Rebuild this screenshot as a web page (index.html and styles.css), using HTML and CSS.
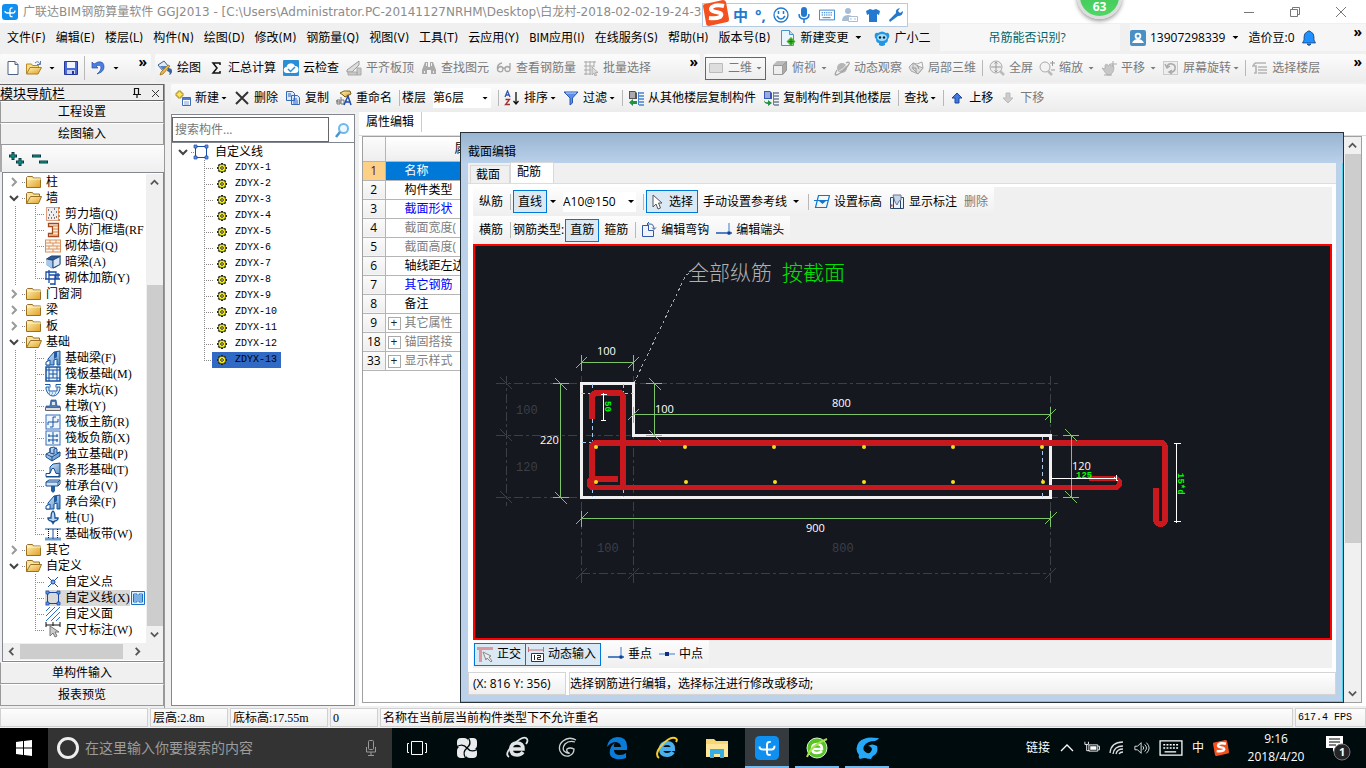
FILE: index.html
```html
<!DOCTYPE html>
<html lang="zh-CN">
<head>
<meta charset="utf-8">
<title>广联达BIM钢筋算量软件 GGJ2013</title>
<link rel="stylesheet" href="styles.css">
</head>
<body>
<svg class="defs" aria-hidden="true">
  <defs>
    <linearGradient id="gold" x1="0" y1="0" x2="1" y2="1"><stop offset="0" stop-color="#fff3b8"/><stop offset="1" stop-color="#e0a024"/></linearGradient>
    <linearGradient id="steel" x1="0" y1="0" x2="1" y2="1"><stop offset="0" stop-color="#e8f2fc"/><stop offset="1" stop-color="#4c86c6"/></linearGradient>
  </defs>
  <symbol id="logo" viewBox="0 0 16 16"><rect width="16" height="16" rx="3" fill="#0f8ff0"/><path d="M10.500 4Q8 3.500 8 6v5q0 2 2.500 1.500M3 7q0 2 2.500 2H11q2 0 2-2.500" fill="none" stroke="#fff" stroke-width="1.300"/></symbol>
  <symbol id="doc" viewBox="0 0 16 16"><path d="M3 1.500h7l3 3v10H3z" fill="#fff" stroke="#4d6185"/><path d="M10 1.500v3h3" fill="#cfe0f5" stroke="#4d6185"/></symbol>
  <symbol id="open" viewBox="0 0 16 16"><path d="M.5 14V4h5l1 1.500h6V8" fill="#f8dc80" stroke="#b8892c"/><path d="M.5 14 4 7.500h11.500L12 14z" fill="url(#gold)" stroke="#b07f20"/><path d="M9 3q3-3 5 1M14.500 1v3.500H11" fill="none" stroke="#5c7faa"/></symbol>
  <symbol id="save" viewBox="0 0 16 16"><path d="M1.500 1.500h13v13h-13z" fill="#4b6bd6" stroke="#26379b"/><path d="M4 2h8v6H4z" fill="#f1f5ff"/><path d="M4 10h8v4H4z" fill="#c9d3ee"/><path d="M9 11h2v3H9z" fill="#26379b"/></symbol>
  <symbol id="undo" viewBox="0 0 16 16"><path d="M2 2v6h6L6 6q5-2 5 2 0 3-4 6 7-2 7-7 0-6-6-5L4 4z" fill="#4b7fe0" stroke="#234fae" stroke-width=".7"/></symbol>
  <symbol id="paint" viewBox="0 0 16 16"><path d="M1 5 7 1l5 6-6 4z" fill="#dfe9f7" stroke="#3a5d91"/><path d="M3 6h7L6 10z" fill="#4d83c8"/><path d="m13 6-7 8-3 1 1-3 7-7z" fill="#f3b63c" stroke="#8e6517" stroke-width=".7"/><path d="M11 8q4 0 4 3t-3 4q2-3-2-4z" fill="#355f9e"/></symbol>
  <symbol id="sigma" viewBox="0 0 16 16"><path d="M12 5V3H5l4 5-4 5h7v-2" fill="none" stroke="#111" stroke-width="1.500"/></symbol>
  <symbol id="cloud" viewBox="0 0 16 16"><rect width="16" height="16" rx="1" fill="#2b8fd8"/><path d="M4 13a3 3 0 0 1-.5-6A4.500 4.500 0 0 1 12 6a3.500 3.500 0 0 1 0 7z" fill="#fff"/><path d="m5 9 2.500 2.500L12 7" fill="none" stroke="#2b8fd8" stroke-width="1.500"/></symbol>
  <symbol id="level" viewBox="0 0 16 16"><path d="M1 10 9 4l4-3v4L6 12H1z" fill="#ddd" stroke="#999"/><path d="M2 12h9v3H2zM11 8h4v7h-4z" fill="#c9c9c9" stroke="#aaa"/></symbol>
  <symbol id="binoc" viewBox="0 0 16 16"><path d="M4 2h3v5h2V2h3l3 8v4h-5v-4H6v4H1v-4z" fill="#aaa"/><path d="M3 11h1v2H3zM12 11h1v2h-1zM5 3h1v3H5zM10 3h1v3h-1z" fill="#eee"/></symbol>
  <symbol id="glasses" viewBox="0 0 16 16"><path d="M6 3Q1 4 1.500 9a2.700 2.700 0 1 0 3-2.500Q2 7 2 9m5-1h2M14 3v6a2.500 2.500 0 1 1-2.500-2.500Q14 7 14 9" fill="none" stroke="#a5a5a5" stroke-width="1.300"/></symbol>
  <symbol id="batch" viewBox="0 0 16 16"><path d="M1 2h12M1 6h10M1 10h7M1 14h7M3 1v14M7 1v14M11 1v6" stroke="#aaa" fill="none"/><path d="M9 7v8l2-2 1 3 1.500-.5-1-3H15z" fill="#ddd" stroke="#999" stroke-width=".7"/></symbol>
  <symbol id="flat" viewBox="0 0 16 16"><path d="M1.500 3.500h13v9h-13z" fill="#ddd" stroke="#bbb"/></symbol>
  <symbol id="cube" viewBox="0 0 16 16"><path d="M1 5 5 1h10v9l-4 5H1z" fill="#bcbcbc"/><path d="M1.500 5.500h9v9h-9z" fill="#eee" stroke="#999"/><path d="m10.500 5.500 4-4v9l-4 4" fill="#aaa" stroke="#999"/></symbol>
  <symbol id="orbit" viewBox="0 0 16 16"><circle cx="8" cy="8" r="5" fill="#b5b5b5"/><path d="M12 3q4-2 3 1-2 4-6 7-5 4-7 4t1-5" fill="none" stroke="#a5a5a5" stroke-width="1.300"/><path d="M5 11q5-2 7-6" stroke="#e3e3e3" fill="none"/></symbol>
  <symbol id="local3d" viewBox="0 0 16 16"><path d="m1 7 4-4 5 3 5 2-5 6-7-3z" fill="#ddd" stroke="#aaa"/><path d="m5 3 4 1 5-2 1 6-5 6-5-5z" fill="none" stroke="#aaa"/><path d="M4 8h4v4M9 5l2 4" stroke="#999" fill="none"/></symbol>
  <symbol id="fullview" viewBox="0 0 16 16"><circle cx="7" cy="7" r="6" fill="#eee" stroke="#aaa"/><path d="M7 2v10M2 7h10M5.500 3.500 7 2l1.500 1.500m-3 7L7 12l1.500-1.500" stroke="#999" fill="none"/><path d="m11 11 4 4" stroke="#bbb" stroke-width="2.500"/></symbol>
  <symbol id="zoom" viewBox="0 0 16 16"><circle cx="6" cy="7" r="5" fill="#f3f3f3" stroke="#aaa"/><path d="m9 11 4 4" stroke="#bbb" stroke-width="2.500"/><path d="M11 3h5M13.500 1v5M12 10h4" stroke="#999"/></symbol>
  <symbol id="hand" viewBox="0 0 16 16"><path d="m1 8 3 1V5l2-1 1 2 2-2 1 2 2-1 1 3-1 4-3 3H6z" fill="#c7c7c7" stroke="#aaa" stroke-width=".7"/><path d="M12 1v6M9 4h7M3 15h8" stroke="#aaa"/></symbol>
  <symbol id="rotate" viewBox="0 0 16 16"><rect x=".5" y="1.500" width="14" height="13" fill="#eee" stroke="#ccc"/><path d="M4 7q1-4 5-3t3 5q-1 4-6 3M2 4l2 4 3-2M9 14l-3-2 3-2" fill="none" stroke="#aaa" stroke-width="1.500"/></symbol>
  <symbol id="floors" viewBox="0 0 16 16"><path d="M3 3h11M6 7h9M6 10h9M6 13h9M3 3 1 6h3v7H2" stroke="#b5b5b5" stroke-width="1.700" fill="none"/></symbol>
  <symbol id="new" viewBox="0 0 16 16"><path d="M3 1h3v2h2v3H6v2H3V6H1V3h2z" fill="#ffe45c" stroke="#9b7b12" stroke-width=".8"/><path d="M7.500 7.500h8v8h-8z" fill="#fff" stroke="#3f6db7"/><path d="M8 8h7v2H8z" fill="#4f80d5"/><path d="M9 12h5M9 14h5" stroke="#7a9fd8"/></symbol>
  <symbol id="cross" viewBox="0 0 16 16"><path d="M2 2 14 14M14 2 2 14" stroke="#333" stroke-width="2"/></symbol>
  <symbol id="copy" viewBox="0 0 16 16"><path d="M1.500 1.500h6l2 2v7h-8zM6.500 5.500h6l2 2v7h-8z" fill="#dce8fb" stroke="#3567b8"/><path d="M3 4h3M3 6h3M8 9h4M8 11h5M8 13h5" stroke="#3567b8"/></symbol>
  <symbol id="rename" viewBox="0 0 16 16"><path d="m4 3 4-2h6l1 3-6 3-2-2z" fill="url(#gold)" stroke="#7c5b15"/><path d="M1 10h3v4H1zV12h3M5 7v7h3v-4H5" fill="none" stroke="#777"/><path d="m8 15 4-9 3 9m-5-3h4" fill="none" stroke="#224aa8" stroke-width="1.500"/></symbol>
  <symbol id="sort" viewBox="0 0 16 16"><path d="m1 7 2.500-6L6 7M2 5h3" fill="none" stroke="#3556b4" stroke-width="1.300"/><path d="M1.500 9.500h4l-4 5h4.500" fill="none" stroke="#a52f2f" stroke-width="1.300"/><path d="M12 2v12m-2.500-3 2.500 3 2.500-3" fill="none" stroke="#111" stroke-width="1.300"/></symbol>
  <symbol id="filter" viewBox="0 0 16 16"><path d="M1 2h14l-5.500 6v5L7 15V8z" fill="#5a8fe4" stroke="#2b58b3"/><path d="M3 3h10" stroke="#bdd5fa"/></symbol>
  <symbol id="copyfrom" viewBox="0 0 16 16"><path d="M1 1h6l2 2v6H1z" fill="#555"/><path d="M2 3h5M2 5h5M2 7h5" stroke="#fff"/><path d="M11 3h5M11 6h5M11 9h5M11 12h5M11 15h5" stroke="#4a82cb" stroke-width="1.700"/><path d="M10.500 2v13" stroke="#4a82cb"/><path d="M5 9v2h4v3H5v2l-4-3.500z" fill="#239043"/></symbol>
  <symbol id="copyto" viewBox="0 0 16 16"><path d="M1 1h6l2 2v6H1z" fill="#3659b8"/><path d="M2 3h5M2 5h5M2 7h5" stroke="#fff"/><path d="M11 3h5M11 6h5M11 9h5M11 12h5M11 15h5" stroke="#6c7f97" stroke-width="1.700"/><path d="M10.500 2v13" stroke="#6c7f97"/><path d="M1 10q1 3 4 2v-2l4 3-4 3v-2q-4 0-4-4z" fill="#239043"/></symbol>
  <symbol id="up" viewBox="0 0 16 16"><path d="m8 3 5 5h-3v5H6V8H3z" fill="#4179df" stroke="#1e469c"/></symbol>
  <symbol id="down" viewBox="0 0 16 16"><path d="m8 13 5-5h-3V3H6v5H3z" fill="#ccc" stroke="#bbb"/></symbol>
  <symbol id="change" viewBox="0 0 16 16"><path d="M1.500.5h8l4 4v11h-12z" fill="#e9f4fd" stroke="#4d91cb"/><path d="M9.500.5v4h4" fill="#bcdcf5" stroke="#4d91cb"/><path d="m11 7 4.500 4.500L11 16l-4.500-4.500z" fill="#42b32c"/><path d="M11 9v5M8.500 11.500h5" stroke="#1c7a12"/></symbol>
  <symbol id="xiaoer" viewBox="0 0 16 16"><path d="M1 4q1-2 3-1 4-3 8 0 2-1 3 1 1 3-1 5 0 4-3 4v2q-3 2-6 0v-2q-3 0-3-4-2-2-1-5z" fill="#2196e3"/><ellipse cx="8" cy="7.500" rx="5" ry="3.500" fill="#a6dcfa"/><circle cx="6" cy="7.500" r="1.200" fill="#123"/><circle cx="10" cy="7.500" r="1.200" fill="#123"/></symbol>
  <symbol id="user" viewBox="0 0 16 16"><rect width="16" height="16" rx="2" fill="#4a90c4"/><circle cx="8" cy="6" r="3.300" fill="#fff"/><circle cx="8" cy="6" r="1.500" fill="#4a90c4"/><path d="M2 13q2-4 6-4t6 4z" fill="#fff"/></symbol>
  <symbol id="bell" viewBox="0 0 16 16"><path d="M7 1h2l1 1q3 1 3 5v3l1.500 3h-13L3 10V7q0-4 3-5zM6 14h4q-2 3-4 0" fill="#1e90ff" stroke="#1a355c" stroke-width=".7"/></symbol>
  <symbol id="search" viewBox="0 0 16 16"><circle cx="9.500" cy="6.500" r="4.500" fill="#eef8fe" stroke="#6fb8e8" stroke-width="2"/><path d="m6 10-4 5" stroke="#4b95cf" stroke-width="2.500"/></symbol>
  <symbol id="pin" viewBox="0 0 16 16"><path d="M5.500 9V3.500h4V9M4 9.500h8M8 10v3M9.500 3v6" fill="none" stroke="#111" stroke-width="1.200"/></symbol>
  <symbol id="close" viewBox="0 0 16 16"><path d="m5 5 7 7m0-7-7 7" stroke="#333"/></symbol>
  <symbol id="folder" viewBox="0 0 16 16"><path d="M.5 13.500V3.500l1-1h5l1 1.500h7v9.500z" fill="url(#gold)" stroke="#9a7124"/><path d="M1 5h14" stroke="#fff5cf"/></symbol>
  <symbol id="folderopen" viewBox="0 0 16 16"><path d="M.5 13.500V3.500l1-1h5l1 1.500h6V7" fill="#f8e2a0" stroke="#9a7124"/><path d="m.5 13.500 4-7h11l-3 7z" fill="url(#gold)" stroke="#9a7124"/></symbol>
  <symbol id="shear" viewBox="0 0 16 16"><rect x="1.500" y="1.500" width="12" height="13" fill="#eee" stroke="#e0a080"/><path d="M3 4h1M6 6h1M9 3h1M4 9h1M8 9h1M11 6h1M11 11h1M6 12h1M3 12h1M9 12h1" stroke="#555" stroke-width="1.300"/><path d="M14 1v2M14 5v2M14 9v2M14 13v2" stroke="#e08035" stroke-width="2"/></symbol>
  <symbol id="gatewall" viewBox="0 0 16 16"><path d="M3.500 1.500h10v13h-10v-3h4v-7h-4z" fill="#fff0dc" stroke="#a24a1d" stroke-width="1.300"/><path d="M8 4h5M8 7h5M8 10h5M5 13h8" stroke="#d4813c"/></symbol>
  <symbol id="brick" viewBox="0 0 16 16"><rect x=".5" y="2" width="15" height="12" fill="#fdf4ee" stroke="#d9925d"/><path d="M1 5h14M1 8h14M1 11h14M5 2v3M11 2v3M8 5v3M4 8v3M12 8v3M8 11v3" stroke="#d9925d"/></symbol>
  <symbol id="beam" viewBox="0 0 16 16"><path d="m1.500 5 5-3h9v8l-5 4-4 .5-5-3.500z" fill="#6d9ace"/><path d="m1.500 5 5-3h9l-7 4z" fill="#2d5a98" stroke="#23436e"/><path d="M8 6 15 2.500v8L8 14z" fill="#d8e6f5" stroke="#23436e"/><path d="M2 5.500 7 7v7l-5-3z" fill="#a9c8ea"/></symbol>
  <symbol id="brickbar" viewBox="0 0 16 16"><path d="M1 2h10v7H1zM4 5h11M4 0v13M10 5v10M0 9h15M13 3v6M5 14h5" fill="none" stroke="#174ba6" stroke-width="1.300"/></symbol>
  <symbol id="fbeam" viewBox="0 0 16 16"><path d="m1 15 2-4V9l6-7 6-1v14h-3V9l-3 1v5z" fill="url(#steel)" stroke="#12509b"/><path d="M9 2v7l3-2V2z" fill="#225a9e"/><path d="M1 15v-3l4-2v5z" fill="#fff" stroke="#12509b"/></symbol>
  <symbol id="raft" viewBox="0 0 16 16"><rect x="1" y="1" width="14" height="14" fill="#e9f3ff" stroke="#17549f" stroke-width="1.500"/><path d="M4 1v14M8 4v8M12 1v14M1 4h14M4 8h8M1 12h14" stroke="#17549f"/></symbol>
  <symbol id="pit" viewBox="0 0 16 16"><path d="M1 5h3v4h8V5h3v2q-2 7-7 7T1 7z" fill="#dcecff" stroke="#1a5aa8"/><path d="M0 2.500h5v3M16 2.500h-5v3" stroke="#1a5aa8" fill="none"/><path d="M4 11h1M7 11h1M10 11h1M6 13h1M9 13h1" stroke="#3d75bb"/></symbol>
  <symbol id="pier" viewBox="0 0 16 16"><path d="M6 2h5l1 6h3v2H1V8h4z" fill="#4e7bba" stroke="#1d477f" stroke-width=".7"/><path d="M.5 9.500h15v3H.5z" fill="#ddd" stroke="#666"/><path d="M7 4h3v3H7z" fill="#d6e5f7"/></symbol>
  <symbol id="mainbar" viewBox="0 0 16 16"><rect x="1" y="1" width="14" height="14" fill="#eef5ff" stroke="#3470bd"/><path d="M8 3v10M3 8h10M8 3h3M3 8v3M13 5v3M8 13H5" stroke="#17549f" fill="none"/></symbol>
  <symbol id="negbar" viewBox="0 0 16 16"><rect x="1" y="1" width="14" height="14" fill="#eef5ff" stroke="#3470bd"/><path d="M8 2v12M3 6h10M3 10h10M4 4v3M12 4v3M4 9v3M12 9v3" stroke="#17549f" fill="none"/></symbol>
  <symbol id="isolated" viewBox="0 0 16 16"><path d="m1 8 4-2V2l4-1 3 2v4l3-1v4l-8 5-6-4z" fill="url(#steel)" stroke="#194f90"/><path d="m1 8 6 3 8-5M5 2v5l4 1V3M9 3l3-1M7 11v4" fill="none" stroke="#194f90"/></symbol>
  <symbol id="strip" viewBox="0 0 16 16"><path d="m1 15 3-4h1V5l3-3 7-1v14z" fill="url(#steel)" stroke="#194f90"/><path d="M1 14.500v-3h4l2-5h2l2 5h3v3z" fill="#fff" stroke="#194f90"/></symbol>
  <symbol id="pilecap" viewBox="0 0 16 16"><path d="m1 4 3-2h11v4l-2 2H1z" fill="#cfe2f7" stroke="#194f90"/><path d="M6 8h4v5l-2 2-2-2z" fill="#255e9f"/><path d="M1 4h12v4M13 4l2-2" fill="none" stroke="#194f90"/></symbol>
  <symbol id="pile" viewBox="0 0 16 16"><path d="M8 1q2 1 2 7h3v1q-1 2-3 2-1 1-2 1t-2-1q-2 0-3-2V8h3Q6 2 8 1z" fill="#b9d4f0" stroke="#194f90" stroke-width="1.300"/><path d="M6 11h4l-2 4z" fill="#194f90"/></symbol>
  <symbol id="band" viewBox="0 0 16 16"><path d="M0 3h16" stroke="#174f96"/><path d="M0 13h16" stroke="#6f9dd2" stroke-width="3"/><path d="M3.500 3v10M12.500 3v10" stroke="#111" stroke-dasharray="1 1"/><path d="M8 3v10" stroke="#174f96"/></symbol>
  <symbol id="point" viewBox="0 0 16 16"><path d="m3 3 10 10M13 3 3 13" stroke="#174ba6"/><circle cx="8" cy="8" r="2" fill="#7fa6dc" stroke="#174ba6"/></symbol>
  <symbol id="square" viewBox="0 0 16 16"><path d="M2.500 2.500h11v11h-11z" fill="none" stroke="#174ba6"/><path d="M1 1h3v3H1zM12 1h3v3h-3zM1 12h3v3H1zM12 12h3v3h-3z" fill="#5f93e6" stroke="#174ba6" stroke-width=".7"/></symbol>
  <symbol id="face" viewBox="0 0 16 16"><path d="m1 5 4-4M1 10l9-9M1 15 15 1M6 15l9-9M11 15l4-4" stroke="#2a6fd8"/></symbol>
  <symbol id="dimension" viewBox="0 0 16 16"><path d="M1 0v5M15 0v5M8 0v4M1 3h14" stroke="#111"/><path d="M5 4v10l3-3 2 4 2-1-2-4h4z" fill="#ccc" stroke="#777"/></symbol>
  <symbol id="gear" viewBox="0 0 12 12"><path d="M6 1v10M1 6h10M2.500 2.500l7 7M9.500 2.500l-7 7" stroke="#222" stroke-width="2.200"/><circle cx="6" cy="6" r="3.800" fill="#f6f410" stroke="#222" stroke-width=".7"/><circle cx="6" cy="6" r="1.300" fill="#fff" stroke="#222"/></symbol>
  <symbol id="plus2" viewBox="0 0 16 16"><path d="M5 1v8M1 5h8M12 7v8M8 11h8" stroke="#063d42" stroke-width="3"/><path d="M5 2v6M2 5h6M12 8v6M9 11h6" stroke="#12a08f"/></symbol>
  <symbol id="minus2" viewBox="0 0 16 16"><path d="M0 5h9M7 11h9" stroke="#063d42" stroke-width="3"/><path d="M1 5h7M8 11h7" stroke="#12a08f"/></symbol>
  <symbol id="cursor" viewBox="0 0 16 16"><path d="M4 1v12l3-3 2 5 2.500-1-2-5H13z" fill="#fff" stroke="#555"/></symbol>
  <symbol id="elev" viewBox="0 0 16 16"><path d="M4.500 1.500h11l-3 12h-11zM0 6.500h14" fill="none" stroke="#1177cc" stroke-width="1.200"/><path d="M5 7h7l-3.500 3z" fill="#1177cc"/></symbol>
  <symbol id="mark" viewBox="0 0 16 16"><path d="M1.500 3.500h13v11h-13z" fill="#eaf4ff" stroke="#27476d"/><path d="M4.500 3v12M11.500 3v12" stroke="#27476d"/><path d="M4 1h8v5l-2 1-2 4-2-3z" fill="#c5d5ec" stroke="#6f7890"/><path d="M1.500 11.500h2" stroke="#d13a1c" stroke-width="2"/></symbol>
  <symbol id="hook" viewBox="0 0 16 16"><path d="M1.500 3.500h6v5h5v6h-11z" fill="#eef3fd" stroke="#3457a4"/><path d="M6 2h3q4 0 4 5M8 0 6 2l2 2M11 5.500l2 2 2-2" fill="none" stroke="#3457a4"/></symbol>
  <symbol id="tip" viewBox="0 0 16 16"><path d="M13 1v12" stroke="#7aa3de" stroke-width="1.500"/><path d="M0 11h16" stroke="#1a5ab5" stroke-width="1.500"/><path d="M11.500 9.500h3v3h-3z" fill="#103f91"/></symbol>
  <symbol id="ortho" viewBox="0 0 16 16"><path d="M0 2.500h16M3.500 1v15" stroke="#da999c" stroke-width="3"/><path d="m6 6 8 4-2 1 3 4-1 1-4-4-1 2z" fill="#eee" stroke="#888"/></symbol>
  <symbol id="dynin" viewBox="0 0 16 16"><path d="M0 4h16M.5 1v5M15.500 1v5" stroke="#c66c73"/><path d="M3.500 7.500h12v8h-12z" fill="#fff" stroke="#333"/><path d="M6.500 9v5M9 9.500h3.500v2H9.500v2H13" fill="none" stroke="#222"/></symbol>
  <symbol id="mid" viewBox="0 0 16 16"><path d="M0 8h16" stroke="#7aa3de" stroke-width="1.500"/><path d="M6 6h4v4H6z" fill="#102f81"/></symbol>
  <symbol id="win" viewBox="0 0 16 16"><path d="m0 2 7-1v6.500H0zM8 1l8-1v7.500H8zM0 8.500h7V15l-7-1zM8 8.500h8V16l-8-1z" fill="#fff"/></symbol>
  <symbol id="mic" viewBox="0 0 16 16"><rect x="5.500" y=".5" width="5" height="9" rx="1" fill="none" stroke="#999"/><path d="M3.500 7v5h9V7M8 12v3.500M5 15.500h6" fill="none" stroke="#999"/></symbol>
  <symbol id="taskview" viewBox="0 0 22 16"><path d="M5.500 1.500h11v13h-11zM3 3.500H1.500v9H3M19 3.500h1.500v9H19" fill="none" stroke="#fff"/></symbol>
  <symbol id="fan" viewBox="0 0 24 24"><g fill="#e9ebec"><rect x="2" y="2" width="11" height="10" rx="4"/><rect x="12" y="2" width="10" height="11" rx="4"/><rect x="11" y="12" width="11" height="10" rx="4"/><rect x="2" y="11" width="10" height="11" rx="4"/></g><path d="M12 12Q8 7 2 10.500M12 12q5-4 1.500-10M12 12q4 5 10 1.500M12 12q-5 4-1.500 10" fill="none" stroke="#000b0d" stroke-width="1.300"/></symbol>
  <symbol id="eglobe" viewBox="0 0 24 24"><path d="M6 13h12q0-6-6-6t-6 6q0 6 6 6 4 0 6-3" fill="none" stroke="currentColor" stroke-width="3.500"/><path d="M4 21Q-1 18 8 9T21 2q3 2 0 6" fill="none" stroke="currentColor" stroke-width="1.800"/></symbol>
  <symbol id="swirl" viewBox="0 0 24 24"><path d="M21 4Q14 0 8 5q-5 4-3 10 3 6 9 5 5-2 5-7-4-2-7 0-1 3 2 4M20 6q-6-2-10 2-3 4-1 7 3 3 6 2" fill="none" stroke="#cfd2d3" stroke-width="1.300"/></symbol>
  <symbol id="edge" viewBox="0 0 24 24"><path d="M2 11Q3 2 12 1q10 0 10 9v4H9q0 5 6 5 4 0 6-2v5q-5 2-10 1-8-2-6-9 1-5 5-7-2 2-1 4h7q0-4-5-5-5 0-9 5z" fill="#0a7bd6"/></symbol>
  <symbol id="ie" viewBox="0 0 24 24"><path d="M6 13h12q0-6-6-6t-6 6q0 6 6 6 4 0 6-3" fill="none" stroke="#49b0ef" stroke-width="4"/><path d="M4 22Q-1 18 7 9T20 2q3 1 1 4" fill="none" stroke="#f2cc34" stroke-width="2"/></symbol>
  <symbol id="explorer" viewBox="0 0 24 24"><path d="M1 3h8l2 2h12v16H1z" fill="#f7d774"/><path d="M1 8h22v13H1z" fill="#ffe69a"/><path d="M5 13h14v9h-4v-4H9v4H5z" fill="#36aee3"/></symbol>
  <symbol id="green" viewBox="0 0 24 24"><circle cx="12" cy="12" r="10" fill="#58c228" stroke="#d8f7c8"/><path d="M7 13h10q0-5-5-5t-5 5q0 4 5 4 3 0 5-2" fill="none" stroke="#fff" stroke-width="2.500"/><path d="M2 21Q6 9 22 3" fill="none" stroke="#a5e34d" stroke-width="2"/></symbol>
  <symbol id="bluewave" viewBox="0 0 24 24"><path d="M22 2Q10 0 4 6q-5 7 0 13-1 3 1 4 3-1 5-1 3 1 6 1 1-2 2-3 6-3 4-10-5-3-9 0 3 0 4 3-1 5-5 4-5-2-3-7 3-5 11-5 3-1 4-3z" fill="#25a8f8"/></symbol>
  <symbol id="sogou" viewBox="0 0 26 26"><path d="M0 6q0-2 2-2L20 0q2 0 3 2l3 17q0 3-2 3L6 26q-3 0-3-3z" fill="#f4511e"/><path d="M21 6q-8-2-12 1-3 4 4 5 8 1 4 5-4 2-11 1" fill="none" stroke="#fff" stroke-width="4"/></symbol>
  <symbol id="smile" viewBox="0 0 16 16"><circle cx="8" cy="8" r="7" fill="none" stroke="#2279cf" stroke-width="1.300"/><path d="M4 9q4 6 8 0M5.500 4v3M10.500 4v3" fill="none" stroke="#2279cf" stroke-width="1.500"/></symbol>
  <symbol id="voice" viewBox="0 0 16 16"><rect x="5" y="0" width="6" height="10" rx="3" fill="#2279cf"/><path d="M3 7q0 5 5 5t5-5M8 12v4" fill="none" stroke="#2279cf" stroke-width="1.500"/></symbol>
  <symbol id="kb" viewBox="0 0 18 14"><path d="M.5 1.500h17v11H.5z" fill="none" stroke="currentColor"/><path d="M3 4.500h12M3 7h12" stroke="currentColor" stroke-width="1.200" stroke-dasharray="1.500 1"/><path d="M4 10h9" stroke="currentColor"/></symbol>
  <symbol id="person" viewBox="0 0 16 16"><circle cx="6" cy="4" r="3" fill="#a8bdd4"/><path d="M0 14q0-6 6-6t6 6z" fill="#a8bdd4"/><path d="M6.500 9.500h9v5h-9zM8 12h2m2 0h2" fill="#fff" stroke="#a8bdd4"/></symbol>
  <symbol id="shirt" viewBox="0 0 16 16"><path d="m5 2 3 1 3-1 4 2-1 4-2-1v8H4V7L2 8 1 4z" fill="#2279cf"/></symbol>
  <symbol id="wrench" viewBox="0 0 16 16"><path d="m2 15-1-2 7-7q-1-4 4-5l-2 3 2 2 3-2q0 5-5 5z" fill="#2279cf"/></symbol>
  <symbol id="battery" viewBox="0 0 18 16"><path d="M5.500 4.500h10v7h-10zM16 6h1.500v4H16" fill="none" stroke="#fff"/><path d="M7 6h7v4H7z" fill="#fff"/><path d="M1 1v3h4V1M3 4v7h3" fill="none" stroke="#fff"/></symbol>
  <symbol id="wifi" viewBox="0 0 16 16"><path d="M1 13Q2 2 14 2M4 14Q5 6 14 6M7 14q1-5 7-5M10 14q1-2 4-2" fill="none" stroke="#ddd" stroke-width="1.300"/></symbol>
  <symbol id="volume" viewBox="0 0 18 16"><path d="M1 6h3l4-4v12l-4-4H1zM10 6q2 2 0 4M12 4q4 4 0 8M14 2q6 6 0 12" fill="none" stroke="#eee"/></symbol>
  <symbol id="notice" viewBox="0 0 28 28"><path d="M1 2h17v12h-7l-3 4v-4H1z" fill="#fff"/><path d="M4 5h11M4 8h11M4 11h7" stroke="#000"/><circle cx="17" cy="18" r="8" fill="#252525" stroke="#777"/></symbol>
</svg>

<div class="app">
  <header class="titlebar">
    <svg class="ic"><use href="#logo"/></svg>
    <h1 class="titlebar-text">广联达BIM钢筋算量软件 GGJ2013 - [C:\Users\Administrator.PC-20141127NRHM\Desktop\白龙村-2018-02-02-19-24-35</h1>
    <div class="window-buttons">
      <button type="button" aria-label="最小化"><svg class="ic" viewBox="0 0 16 16"><path d="M3 8.500h10" stroke="#777"/></svg></button>
      <button type="button" aria-label="还原"><svg class="ic" viewBox="0 0 16 16"><path d="M3.500 5.500h7v7h-7zM5.500 5V3.500h7v7H11" fill="none" stroke="#777"/></svg></button>
      <button type="button" aria-label="关闭"><svg class="ic" viewBox="0 0 16 16"><path d="m3 3 10 10M13 3 3 13" stroke="#777"/></svg></button>
    </div>
  </header>

  <nav class="menubar">
    <button type="button">文件(F)</button><button type="button">编辑(E)</button><button type="button">楼层(L)</button><button type="button">构件(N)</button><button type="button">绘图(D)</button><button type="button">修改(M)</button><button type="button">钢筋量(Q)</button><button type="button">视图(V)</button><button type="button">工具(T)</button><button type="button">云应用(Y)</button><button type="button">BIM应用(I)</button><button type="button">在线服务(S)</button><button type="button">帮助(H)</button><button type="button">版本号(B)</button>
    <button type="button" class="tool"><svg class="ic"><use href="#change"/></svg>新建变更<i class="caret"></i></button>
    <button type="button" class="tool"><svg class="ic"><use href="#xiaoer"/></svg>广小二</button>
    <a class="tipline" href="#tip">吊筋能否识别?</a>
    <div class="account">
      <button type="button" class="tool"><svg class="ic"><use href="#user"/></svg>13907298339<i class="caret"></i></button>
      <button type="button" class="tool">造价豆:0 <svg class="ic bell"><use href="#bell"/></svg></button>
      <span class="more">»</span>
    </div>
  </nav>

  <div class="toolbars">
    <div class="toolbar files">
      <button type="button" class="tool" aria-label="新建工程"><svg class="ic"><use href="#doc"/></svg></button>
      <button type="button" class="tool" aria-label="打开"><svg class="ic"><use href="#open"/></svg><i class="caret"></i></button>
      <button type="button" class="tool" aria-label="保存"><svg class="ic"><use href="#save"/></svg></button>
      <i class="sep tall"></i>
      <button type="button" class="tool" aria-label="撤销"><svg class="ic"><use href="#undo"/></svg><i class="caret"></i></button>
      <span class="more">»</span>
    </div>
    <div class="toolbar actions">
      <button type="button" class="tool"><svg class="ic"><use href="#paint"/></svg>绘图</button>
      <button type="button" class="tool"><svg class="ic"><use href="#sigma"/></svg>汇总计算</button>
      <button type="button" class="tool"><svg class="ic"><use href="#cloud"/></svg>云检查</button>
      <button type="button" class="tool" disabled><svg class="ic"><use href="#level"/></svg>平齐板顶</button>
      <button type="button" class="tool" disabled><svg class="ic"><use href="#binoc"/></svg>查找图元</button>
      <button type="button" class="tool" disabled><svg class="ic"><use href="#glasses"/></svg>查看钢筋量</button>
      <button type="button" class="tool" disabled><svg class="ic"><use href="#batch"/></svg>批量选择</button>
      <span class="more">»</span>
    </div>
    <div class="toolbar views">
      <button type="button" class="tool boxed" disabled><svg class="ic"><use href="#flat"/></svg>二维<i class="caret"></i></button>
      <button type="button" class="tool" disabled><svg class="ic"><use href="#cube"/></svg>俯视<i class="caret"></i></button>
      <button type="button" class="tool" disabled><svg class="ic"><use href="#orbit"/></svg>动态观察</button>
      <button type="button" class="tool" disabled><svg class="ic"><use href="#local3d"/></svg>局部三维</button>
      <i class="sep"></i>
      <button type="button" class="tool" disabled><svg class="ic"><use href="#fullview"/></svg>全屏</button>
      <button type="button" class="tool" disabled><svg class="ic"><use href="#zoom"/></svg>缩放<i class="caret"></i></button>
      <button type="button" class="tool" disabled><svg class="ic"><use href="#hand"/></svg>平移<i class="caret"></i></button>
      <button type="button" class="tool tight" disabled><svg class="ic"><use href="#rotate"/></svg>屏幕旋转<i class="caret"></i></button>
      <i class="sep"></i>
      <button type="button" class="tool" disabled><svg class="ic"><use href="#floors"/></svg>选择楼层</button>
      <span class="more">»</span>
    </div>
  </div>

  <main class="work">
    <aside class="nav">
      <div class="nav-head"><h2>模块导航栏</h2><svg class="ic"><use href="#pin"/></svg><svg class="ic"><use href="#close"/></svg></div>
      <button type="button" class="nav-button">工程设置</button>
      <button type="button" class="nav-button">绘图输入</button>
      <div class="nav-tools"><button type="button" aria-label="展开"><svg class="ic"><use href="#plus2"/></svg></button><button type="button" aria-label="折叠"><svg class="ic"><use href="#minus2"/></svg></button></div>
      <div class="nav-tree">
        <ul class="tree">
          <li class="branch"><svg class="fold" viewBox="0 0 10 10"><path d="m3 1 4 4-4 4"/></svg><svg class="ic"><use href="#folder"/></svg>柱</li>
          <li class="branch open"><svg class="fold" viewBox="0 0 10 10"><path d="m1 3 4 4 4-4"/></svg><svg class="ic"><use href="#folderopen"/></svg>墙</li>
          <li class="leaf"><svg class="ic"><use href="#shear"/></svg>剪力墙(Q)</li>
          <li class="leaf"><svg class="ic"><use href="#gatewall"/></svg>人防门框墙(RF</li>
          <li class="leaf"><svg class="ic"><use href="#brick"/></svg>砌体墙(Q)</li>
          <li class="leaf"><svg class="ic"><use href="#beam"/></svg>暗梁(A)</li>
          <li class="leaf last"><svg class="ic"><use href="#brickbar"/></svg>砌体加筋(Y)</li>
          <li class="branch"><svg class="fold" viewBox="0 0 10 10"><path d="m3 1 4 4-4 4"/></svg><svg class="ic"><use href="#folder"/></svg>门窗洞</li>
          <li class="branch"><svg class="fold" viewBox="0 0 10 10"><path d="m3 1 4 4-4 4"/></svg><svg class="ic"><use href="#folder"/></svg>梁</li>
          <li class="branch"><svg class="fold" viewBox="0 0 10 10"><path d="m3 1 4 4-4 4"/></svg><svg class="ic"><use href="#folder"/></svg>板</li>
          <li class="branch open"><svg class="fold" viewBox="0 0 10 10"><path d="m1 3 4 4 4-4"/></svg><svg class="ic"><use href="#folderopen"/></svg>基础</li>
          <li class="leaf"><svg class="ic"><use href="#fbeam"/></svg>基础梁(F)</li>
          <li class="leaf"><svg class="ic"><use href="#raft"/></svg>筏板基础(M)</li>
          <li class="leaf"><svg class="ic"><use href="#pit"/></svg>集水坑(K)</li>
          <li class="leaf"><svg class="ic"><use href="#pier"/></svg>柱墩(Y)</li>
          <li class="leaf"><svg class="ic"><use href="#mainbar"/></svg>筏板主筋(R)</li>
          <li class="leaf"><svg class="ic"><use href="#negbar"/></svg>筏板负筋(X)</li>
          <li class="leaf"><svg class="ic"><use href="#isolated"/></svg>独立基础(P)</li>
          <li class="leaf"><svg class="ic"><use href="#strip"/></svg>条形基础(T)</li>
          <li class="leaf"><svg class="ic"><use href="#pilecap"/></svg>桩承台(V)</li>
          <li class="leaf"><svg class="ic"><use href="#fbeam"/></svg>承台梁(F)</li>
          <li class="leaf"><svg class="ic"><use href="#pile"/></svg>桩(U)</li>
          <li class="leaf last"><svg class="ic"><use href="#band"/></svg>基础板带(W)</li>
          <li class="branch"><svg class="fold" viewBox="0 0 10 10"><path d="m3 1 4 4-4 4"/></svg><svg class="ic"><use href="#folder"/></svg>其它</li>
          <li class="branch open"><svg class="fold" viewBox="0 0 10 10"><path d="m1 3 4 4 4-4"/></svg><svg class="ic"><use href="#folderopen"/></svg>自定义</li>
          <li class="leaf tail"><svg class="ic"><use href="#point"/></svg>自定义点</li>
          <li class="leaf tail current"><span><svg class="ic"><use href="#square"/></svg>自定义线(X)</span><svg class="book" viewBox="0 0 14 14"><path d="M.5.500h13v13H.500z" fill="#dff0ff" stroke="#1b6fc4"/><path d="M2.500 3h3.500v8H2.500zM8 3h3.500v8H8zM3 5h2M3 7h2M3 9h2M9 5h2M9 7h2M9 9h2" fill="none" stroke="#1b6fc4"/></svg></li>
          <li class="leaf tail"><svg class="ic"><use href="#face"/></svg>自定义面</li>
          <li class="leaf tail last"><svg class="ic"><use href="#dimension"/></svg>尺寸标注(W)</li>
        </ul>
        <div class="vscroll nav-vscroll"><svg class="arrow" viewBox="0 0 10 10"><path d="m1 7 4-4 4 4"/></svg><i class="thumb"></i><svg class="arrow" viewBox="0 0 10 10"><path d="m1 3 4 4 4-4"/></svg></div>
        <div class="hscroll"><svg class="arrow" viewBox="0 0 10 10"><path d="M7 1 3 5l4 4"/></svg><i class="thumb"></i><svg class="arrow" viewBox="0 0 10 10"><path d="m3 1 4 4-4 4"/></svg></div>
        <i class="corner"></i>
      </div>
      <button type="button" class="nav-button">单构件输入</button>
      <button type="button" class="nav-button">报表预览</button>
    </aside>

    <section class="stage">
      <div class="toolbar edit">
        <button type="button" class="tool tight"><svg class="ic"><use href="#new"/></svg>新建<i class="caret"></i></button>
        <button type="button" class="tool"><svg class="ic"><use href="#cross"/></svg>删除</button>
        <button type="button" class="tool"><svg class="ic"><use href="#copy"/></svg>复制</button>
        <button type="button" class="tool"><svg class="ic"><use href="#rename"/></svg>重命名</button>
        <i class="sep"></i>
        <label for="floor" class="floor-label">楼层</label>
        <span class="combo"><select id="floor"><option>第6层</option></select><i class="caret"></i></span>
        <i class="sep"></i>
        <button type="button" class="tool tight"><svg class="ic"><use href="#sort"/></svg>排序<i class="caret"></i></button>
        <button type="button" class="tool tight"><svg class="ic"><use href="#filter"/></svg>过滤<i class="caret"></i></button>
        <i class="sep"></i>
        <button type="button" class="tool"><svg class="ic"><use href="#copyfrom"/></svg>从其他楼层复制构件</button>
        <button type="button" class="tool"><svg class="ic"><use href="#copyto"/></svg>复制构件到其他楼层</button>
        <i class="sep"></i>
        <button type="button" class="tool tight">查找<i class="caret"></i></button>
        <i class="sep"></i>
        <button type="button" class="tool"><svg class="ic"><use href="#up"/></svg>上移</button>
        <button type="button" class="tool" disabled><svg class="ic"><use href="#down"/></svg>下移</button>
      </div>

      <div class="panels">
        <section class="components">
          <div class="search"><input type="text" aria-label="搜索构件" placeholder="搜索构件..."><button type="button" aria-label="搜索"><svg class="ic"><use href="#search"/></svg></button></div>
          <ul class="tree parts">
            <li class="branch open"><svg class="fold" viewBox="0 0 10 10"><path d="m1 3 4 4 4-4"/></svg><svg class="ic"><use href="#square"/></svg>自定义线</li>
            <li class="part"><svg class="gear"><use href="#gear"/></svg><span>ZDYX-1</span></li>
            <li class="part"><svg class="gear"><use href="#gear"/></svg><span>ZDYX-2</span></li>
            <li class="part"><svg class="gear"><use href="#gear"/></svg><span>ZDYX-3</span></li>
            <li class="part"><svg class="gear"><use href="#gear"/></svg><span>ZDYX-4</span></li>
            <li class="part"><svg class="gear"><use href="#gear"/></svg><span>ZDYX-5</span></li>
            <li class="part"><svg class="gear"><use href="#gear"/></svg><span>ZDYX-6</span></li>
            <li class="part"><svg class="gear"><use href="#gear"/></svg><span>ZDYX-7</span></li>
            <li class="part"><svg class="gear"><use href="#gear"/></svg><span>ZDYX-8</span></li>
            <li class="part"><svg class="gear"><use href="#gear"/></svg><span>ZDYX-9</span></li>
            <li class="part"><svg class="gear"><use href="#gear"/></svg><span>ZDYX-10</span></li>
            <li class="part"><svg class="gear"><use href="#gear"/></svg><span>ZDYX-11</span></li>
            <li class="part"><svg class="gear"><use href="#gear"/></svg><span>ZDYX-12</span></li>
            <li class="part last"><div class="picked"><svg class="gear"><use href="#gear"/></svg><span>ZDYX-13</span></div></li>
          </ul>
        </section>

        <section class="properties">
          <div class="tabs"><h2 class="tab">属性编辑</h2></div>
          <div class="sheet">
            <table class="grid">
              <thead><tr><th class="num"></th><th class="name-head">属</th><th></th></tr></thead>
              <tbody>
                <tr class="active"><th class="num">1</th><td>名称</td><td></td></tr>
                <tr><th class="num">2</th><td>构件类型</td><td></td></tr>
                <tr class="key"><th class="num">3</th><td>截面形状</td><td></td></tr>
                <tr class="locked"><th class="num">4</th><td>截面宽度(</td><td></td></tr>
                <tr class="locked"><th class="num">5</th><td>截面高度(</td><td></td></tr>
                <tr><th class="num">6</th><td>轴线距左边</td><td></td></tr>
                <tr class="key"><th class="num">7</th><td>其它钢筋</td><td></td></tr>
                <tr><th class="num">8</th><td>备注</td><td></td></tr>
                <tr class="locked group"><th class="num">9</th><td><button type="button">+</button>其它属性</td><td></td></tr>
                <tr class="locked group"><th class="num">18</th><td><button type="button">+</button>锚固搭接</td><td></td></tr>
                <tr class="locked group"><th class="num">33</th><td><button type="button">+</button>显示样式</td><td></td></tr>
              </tbody>
            </table>
            <div class="vscroll sheet-vscroll"><svg class="arrow" viewBox="0 0 10 10"><path d="m1 7 4-4 4 4"/></svg><i class="thumb"></i><svg class="arrow" viewBox="0 0 10 10"><path d="m1 3 4 4 4-4"/></svg></div>
          </div>
        </section>
      </div>
    </section>

    <section class="dialog" aria-label="截面编辑">
      <h2 class="dialog-title">截面编辑</h2>
      <div class="dialog-body">
        <div class="dialog-tabs"><button type="button">截面</button><button type="button" class="on">配筋</button></div>
        <div class="page">
          <div class="strip">
            <button type="button" class="tool">纵筋</button><i class="sep"></i>
            <button type="button" class="tool toggled">直线</button><i class="caret"></i>
            <span class="combo spec"><select aria-label="钢筋规格"><option>A10@150</option></select><i class="caret"></i></span><i class="sep"></i>
            <button type="button" class="tool toggled"><svg class="ic"><use href="#cursor"/></svg>选择</button>
            <button type="button" class="tool">手动设置参考线<i class="caret"></i></button><i class="sep"></i>
            <button type="button" class="tool"><svg class="ic"><use href="#elev"/></svg>设置标高</button>
            <button type="button" class="tool"><svg class="ic"><use href="#mark"/></svg>显示标注</button>
            <button type="button" class="tool" disabled>删除</button>
          </div>
          <div class="strip low">
            <button type="button" class="tool">横筋</button><i class="sep"></i>
            <span>钢筋类型:</span>
            <button type="button" class="tool toggled joined">直筋</button>
            <button type="button" class="tool">箍筋</button><i class="sep"></i>
            <button type="button" class="tool"><svg class="ic"><use href="#hook"/></svg>编辑弯钩</button>
            <button type="button" class="tool"><svg class="ic"><use href="#tip"/></svg>编辑端头</button>
          </div>
          <div class="canvas">
            <svg class="drawing" role="img" aria-label="截面配筋图">
              <g transform="translate(-475 -246)">
                <g class="ghost">
                  <path d="M496 383.500H1058M496 435.500H633M496 497.500H581M1050 435.500h8M1050 497.500h8M581 573.500H1051M506.500 376V506M581.500 376V583M633.500 376V583M1050.500 376V583"/>
                  <path class="slash" d="m500 377 12 12m-12 40 12 12m-12 50 12 12M576 579l11-11m41 11 11-11m406 11 11-11"/>
                </g>
                <path class="leader" d="M634 383 686 275 690 273"/>
                <path class="outline" d="M581.500 383.500H633.500V435.500H1050.500V497.500H581.500Z"/>
                <path class="cover" d="M592.500 384V497M623.500 384V497M581 393.500H592M624 393.500H633M582 442.500H592M1042.500 437V497"/>
                <path class="bar" d="M592 419V398Q592 393 597 393H618Q623 393 623 398V487M618 478.500H594A4.500 4.500 0 0 0 594 487.500"/>
                <path class="bar" d="M592 487V448Q592 443 597 443H1160Q1165 443 1165 448V519A4.500 5 0 0 1 1156 519V488"/>
                <path class="bar thin" d="M592 487.500H1115A4 4 0 0 0 1115 478.500H1089"/>
                <g class="dim">
                  <path d="M581.500 362.500H633.500M581.500 355v16M633.500 355v16M560.500 383.500V497.500M553 383.500h16M553 497.500h16M654.500 383.500V435.500M646 383.500h16M646 435.500h16M633.500 414.500H1050.500M633.500 407v16M1050.500 407v16M581.500 518.500H1050.500M581.500 511v16M1050.500 511v16M1071.500 435.500V497.500M1063 435.500h16M1063 497.500h16"/>
                  <path class="slash" d="m576 368 11-11m41 11 11-11M555 378l12 12m-12 102 12 12M649 378l12 12m-12 40 12 12M628 420l11-11m406 11 11-11M576 524l12-12m457 12 12-12M1065 429l12 12m-12 50 12 12"/>
                </g>
                <path class="white" d="M603.500 393V421M601 394h6M601 420h5M1052 478.500H1117M1051.500 476v6M1116.500 475v6M1114 477l4 4M1176.500 443V523M1174 443.500h7M1174 521.500h7"/>
                <g class="node"><circle cx="596" cy="447" r="2"/><circle cx="685" cy="447" r="2"/><circle cx="774" cy="447" r="2"/><circle cx="864" cy="447" r="2"/><circle cx="953" cy="447" r="2"/><circle cx="1042" cy="447" r="2"/><circle cx="596" cy="482" r="2"/><circle cx="686" cy="482" r="2"/><circle cx="775" cy="482" r="2"/><circle cx="864" cy="482" r="2"/><circle cx="953" cy="482" r="2"/><circle cx="1043" cy="482" r="2"/></g>
                <g class="label"><text x="597" y="355">100</text><text x="540" y="444">220</text><text x="655" y="413">100</text><text x="832" y="407">800</text><text x="806" y="532">900</text><text x="1072" y="470">120</text></g>
                <g class="faint"><text x="516" y="414">100</text><text x="516" y="471">120</text><text x="597" y="552">100</text><text x="832" y="552">800</text></g>
                <g class="tag"><text x="1076" y="478">125</text><text transform="translate(605 401) rotate(90)">50</text><text transform="translate(1178 473) rotate(90)">15*d</text></g>
                <text class="caption" x="688" y="280">全部纵筋</text><text class="caption lit" x="782" y="280">按截面</text>
              </g>
            </svg>
          </div>
          <div class="strip foot">
            <button type="button" class="tool toggled"><svg class="ic"><use href="#ortho"/></svg>正交</button>
            <button type="button" class="tool toggled"><svg class="ic"><use href="#dynin"/></svg>动态输入</button>
            <button type="button" class="tool"><svg class="ic"><use href="#tip"/></svg>垂点</button>
            <button type="button" class="tool"><svg class="ic"><use href="#mid"/></svg>中点</button>
          </div>
        </div>
        <footer class="dialog-status"><span class="xy">(X: 816 Y: 356)</span><span class="hint">选择钢筋进行编辑，选择标注进行修改或移动;</span></footer>
      </div>
    </section>
  </main>

  <footer class="status">
    <span class="cell blank"></span><span class="cell height">层高:2.8m</span><span class="cell base">底标高:17.55m</span><span class="cell zero">0</span><span class="cell note">名称在当前层当前构件类型下不允许重名</span><span class="cell fps">617.4 FPS</span>
  </footer>

  <div class="taskbar">
    <button type="button" class="start" aria-label="开始"><svg class="ic"><use href="#win"/></svg></button>
    <div class="cortana"><i class="ring"></i><input type="text" aria-label="搜索" placeholder="在这里输入你要搜索的内容"><svg class="ic"><use href="#mic"/></svg></div>
    <button type="button" class="app-button" aria-label="任务视图"><svg class="view"><use href="#taskview"/></svg></button>
    <button type="button" class="app-button" aria-label="风扇"><svg class="big"><use href="#fan"/></svg></button>
    <button type="button" class="app-button pale" aria-label="浏览器"><svg class="big"><use href="#eglobe"/></svg></button>
    <button type="button" class="app-button" aria-label="旋涡"><svg class="big"><use href="#swirl"/></svg></button>
    <button type="button" class="app-button" aria-label="Edge"><svg class="big"><use href="#edge"/></svg></button>
    <button type="button" class="app-button" aria-label="Internet Explorer"><svg class="big"><use href="#ie"/></svg></button>
    <button type="button" class="app-button" aria-label="文件资源管理器"><svg class="big"><use href="#explorer"/></svg></button>
    <button type="button" class="app-button running front" aria-label="广联达"><svg class="big"><use href="#logo"/></svg></button>
    <button type="button" class="app-button running" aria-label="安全浏览器"><svg class="big"><use href="#green"/></svg></button>
    <button type="button" class="app-button running" aria-label="广联达服务"><svg class="big"><use href="#bluewave"/></svg></button>
    <div class="tray">
      <span>链接</span>
      <svg class="ic" viewBox="0 0 16 16"><path d="m2 11 6-6 6 6" fill="none" stroke="#fff" stroke-width="1.300"/></svg>
      <svg class="ic"><use href="#battery"/></svg>
      <svg class="ic"><use href="#wifi"/></svg>
      <svg class="ic"><use href="#volume"/></svg>
      <svg class="keys"><use href="#kb"/></svg>
      <span>中</span>
      <svg class="ic"><use href="#sogou"/></svg>
      <time class="clock">9:16<br>2018/4/20</time>
      <span class="notice"><svg><use href="#notice"/></svg><b>1</b></span>
    </div>
  </div>

  <div class="ime"><svg class="ime-logo"><use href="#sogou"/></svg><b>中</b><b>°,</b><svg class="ic"><use href="#smile"/></svg><svg class="ic"><use href="#voice"/></svg><svg class="ic"><use href="#kb"/></svg><svg class="ic"><use href="#person"/></svg><svg class="ic"><use href="#shirt"/></svg><svg class="ic"><use href="#wrench"/></svg></div>
  <div class="ball">63</div>
</div>
</body>
</html>
```
FILE: styles.css
```css
* { box-sizing: border-box; }

body {
  margin: 0;
  background: #f0f0f0;
  color: #000;
  font: 12px/16px "Open Sans", "Noto Sans CJK SC", sans-serif;
}

button, input, select { font: inherit; color: inherit; }
button { padding: 0; border: 0; background: none; white-space: nowrap; }
button:disabled { color: #7a7a7a; opacity: 1; }
h1, h2 { margin: 0; font-size: 12px; font-weight: normal; }
ul { margin: 0; padding: 0; list-style: none; }
svg { flex: none; display: block; }

.defs { position: absolute; width: 0; height: 0; }
.ic { width: 16px; height: 16px; }

.app {
  position: relative;
  display: flex;
  flex-direction: column;
  height: 100vh;
  overflow: hidden;
}

/* Title bar */
.titlebar {
  display: flex;
  align-items: center;
  gap: 5px;
  height: 23px;
  padding-left: 2px;
  background: #fff;
  color: #8c8c8c;
}
.titlebar-text {
  flex: 1;
  overflow: hidden;
  font-family: "DejaVu Sans", "Noto Sans CJK SC", sans-serif;
  white-space: nowrap;
}
.window-buttons { display: flex; gap: 30px; padding-right: 17px; }

/* Menu */
.menubar {
  display: flex;
  align-items: center;
  gap: 10px;
  height: 28px;
  padding: 1px 0 0 7px;
  white-space: nowrap;
}
.menubar > button { font-family: "DejaVu Sans Condensed", "Noto Sans CJK SC", sans-serif; }
.tool {
  display: inline-flex;
  align-items: center;
  gap: 4px;
}
.caret {
  flex: none;
  width: 6px;
  height: 3px;
  margin: 0 3px;
  background: currentColor;
  clip-path: polygon(0 0, 100% 0, 50% 100%);
}
.tight .caret { margin: 0; }
.more { font-size: 14px; font-weight: bold; margin-bottom: 12px; }
.tipline {
  flex: 1;
  height: 27px;
  padding: 6px 0 0 48px;
  background: #f7f7f7;
  color: #006468;
  text-decoration: none;
}
.account {
  display: flex;
  align-items: center;
  gap: 7px;
  width: 236px;
  height: 27px;
  background: #f6f6f6;
}
.account .more { margin-left: auto; padding-right: 4px; }
.bell { margin-left: 2px; }

/* Toolbars */
.toolbars { display: flex; height: 32px; padding: 2px 0; margin-top: 1px; gap: 4px; }
.toolbar {
  display: flex;
  align-items: center;
  gap: 7px;
  height: 28px;
  border-radius: 2px;
  background: linear-gradient(#fcfcfc, #ececec);
  white-space: nowrap;
}
.files { width: 151px; padding-left: 5px; gap: 5px; }
.actions { width: 545px; padding-left: 2px; }
.views { flex: 1; padding-left: 1px; gap: 6px; }
.views .caret { margin: 0 1px; }
.views .boxed .caret { margin: 0 3px 0 0; }
.views .tight .caret { margin: 0 0 0 -2px; }
.toolbar .more { margin-left: auto; padding-right: 4px; }
.actions .more { padding-right: 2px; }
.sep { flex: none; width: 1px; height: 16px; background: #b8b8b8; }
.tall { height: 24px; }
.boxed { height: 23px; padding: 0 0 0 2px; border: 1px solid #666; }

.combo { display: flex; align-items: center; background: #fff; }
.combo select {
  flex: 1;
  width: 46px;
  height: 20px;
  padding: 0;
  border: 0;
  background: #fff;
  appearance: none;
}

/* Work area */
.work {
  position: relative;
  flex: 1;
  min-height: 0;
  display: grid;
  grid-template-columns: 165px 1fr;
  gap: 6px;
}
.nav { display: flex; flex-direction: column; min-height: 0; padding-bottom: 2px; background: #eee; border-right: 1px solid #999; }
.nav-head {
  display: flex;
  align-items: center;
  height: 17px;
  border: 1px solid #666;
  border-left: 0;
  gap: 2px;
}
.nav-head h2 { flex: 1; font-size: 13px; }
.nav-button { height: 22px; border: 1px solid #999; border-top-color: #fff; background: #f0f0f0; }
.nav-tools {
  display: flex;
  gap: 8px;
  height: 27px;
  padding: 6px;
  border-left: 2px solid #aaa;
  background: linear-gradient(#fcfcfc, #efefef);
}
.nav-tree {
  flex: 1;
  min-height: 0;
  display: grid;
  grid-template: 1fr 17px / 1fr 17px;
  margin-left: 2px;
  padding: 1px 0;
  border: 1px solid #828790;
  background: #fff;
}
.corner { background: #f0f0f0; }

/* Trees */
.tree { overflow: hidden; font-family: "Liberation Serif", "Noto Sans CJK SC", serif; white-space: nowrap; }
.tree li { display: flex; align-items: center; height: 16px; gap: 4px; }
.branch {
  padding-left: 6px;
  background: repeating-linear-gradient(90deg, #888 0 1px, transparent 1px 2px) 19px 8px / 6px 1px no-repeat;
}
.branch .ic { margin-left: 3px; }
.fold { width: 10px; height: 10px; fill: none; stroke: #999; stroke-width: 2; }
.open .fold { stroke: #444; }
.leaf {
  padding-left: 42px;
  background:
    repeating-linear-gradient(90deg, #888 0 1px, transparent 1px 2px) 32px 8px / 10px 1px no-repeat,
    repeating-linear-gradient(#888 0 1px, transparent 1px 2px) 32px 0 / 1px 16px no-repeat,
    repeating-linear-gradient(#888 0 1px, transparent 1px 2px) 12px 0 / 1px 16px no-repeat;
}
.leaf.last { background-size: 10px 1px, 1px 8px, 1px 16px; }
.leaf.tail { background-size: 10px 1px, 1px 16px, 0 0; }
.leaf.tail.last { background-size: 10px 1px, 1px 8px, 0 0; }
.current span { display: flex; gap: 4px; background: #d9d9d9; }
.tree .current { gap: 1px; }
.book { width: 14px; height: 14px; }

/* Scroll bars */
.vscroll { display: flex; flex-direction: column; align-items: center; width: 17px; background: #f0f0f0; }
.hscroll { display: flex; align-items: center; height: 17px; background: #f0f0f0; }
.arrow { width: 9px; height: 9px; margin: 4px; fill: none; stroke: #555; stroke-width: 2; }
.thumb { background: #cdcdcd; }
.vscroll .thumb { width: 16px; flex: 1; }
.nav-vscroll .thumb { margin-top: 94px; }
.hscroll .thumb { height: 15px; flex: 1; margin-right: 6px; }

.stage { display: flex; flex-direction: column; min-width: 0; min-height: 0; }
.edit { padding-left: 4px; }
.edit .tight .caret { margin-left: -2px; }
.edit .sep + .tool { margin-left: -2px; }
.floor-label { margin-left: -5px; }
.panels { flex: 1; min-height: 0; display: flex; gap: 4px; padding-bottom: 2px; }
.components {
  display: flex;
  flex-direction: column;
  width: 184px;
  margin-top: 2px;
  border: 1px solid #828790;
  background: #fff;
}
.search { display: flex; height: 28px; padding-top: 2px; border-bottom: 1px solid #828790; }
.search input { width: 157px; padding: 0 2px; border: 1px solid #666; outline: 0; }
.search button { flex: 1; display: grid; place-items: center; }
::placeholder { color: #777; opacity: 1; }
.parts { padding-top: 1px; }
.parts .ic { margin: 0 1px 0 0; }
.parts .branch { padding-left: 6px; gap: 5px; }
.part {
  padding-left: 44px;
  font: 10px/16px "Liberation Mono", monospace;
  background:
    repeating-linear-gradient(90deg, #888 0 1px, transparent 1px 2px) 32px 8px / 10px 1px no-repeat,
    repeating-linear-gradient(#888 0 1px, transparent 1px 2px) 32px 0 / 1px 16px no-repeat;
}
.part.last { background-size: 10px 1px, 1px 8px; padding-left: 40px; }
.gear { width: 12px; height: 12px; }
.part span { padding-left: 3px; }
.picked { display: flex; align-items: center; gap: 4px; height: 16px; padding: 0 4px; background: #316ac5; }

.properties { flex: 1; min-width: 0; display: flex; flex-direction: column; background: #fff; }
.tabs { height: 24px; border-bottom: 1px solid #ddd; background: #fff; }
.tab { display: inline-block; height: 20px; padding: 2px 7px; border-right: 1px solid #ccc; }
.sheet { flex: 1; min-height: 0; display: flex; margin: 0 4px 3px 3px; border: 1px solid #a0a0a0; }
.grid { flex: 1; align-self: flex-start; border-collapse: collapse; table-layout: fixed; width: 100%; }
.grid th, .grid td {
  height: 19px;
  padding: 0;
  border-bottom: 1px solid #b5b5b5;
  font-weight: normal;
  line-height: 16px;
  text-align: left;
  white-space: nowrap;
}
.grid thead th { height: 24px; background: linear-gradient(#fff, #eee); }
.grid .num { width: 22px; border-right: 1px solid #b5b5b5; text-align: center; background: linear-gradient(#fbfbfb, #eee); }
.grid .name-head { width: 188px; padding-left: 69px; }
.grid td { padding-left: 19px; }
.grid .key td { color: #00f; }
.grid .locked td { color: #808080; }
.grid .active td { background: #0078d7; color: #fff; }
.grid .active .num { background: #fdd087; color: #604; }
.grid .group td { padding-left: 2px; }
.grid .group button { width: 13px; height: 13px; margin-right: 4px; border: 1px solid #aaa; background: #fff; color: #222; line-height: 10px; vertical-align: middle; }
.sheet-vscroll .thumb { margin-bottom: 142px; }

/* Section editor window */
.dialog {
  position: absolute;
  top: 48px;
  left: 460px;
  right: 22px;
  bottom: 5px;
  display: flex;
  flex-direction: column;
  padding: 0 7px 7px;
  border: 1px solid #263238;
  background: #bcd1ea;
  box-shadow: inset -1px -1px #4fd2ee;
}
.dialog-title { height: 30px; margin: 0 -7px; padding: 11px 7px 0; background: linear-gradient(#99b4d1, #b9d1ea); }
.dialog-body { flex: 1; min-height: 0; display: flex; flex-direction: column; background: #fff; }
.dialog-tabs { display: flex; align-items: flex-end; height: 21px; padding-left: 2px; background: #f0f0f0; border-bottom: 1px solid #ddd; }
.dialog-tabs button { width: 40px; height: 18px; padding-right: 4px; border: 1px solid #d9d9d9; border-bottom: 0; }
.dialog-tabs .on { width: 44px; height: 21px; padding: 0 6px 2px 0; background: #fff; }
.page { flex: 1; min-height: 0; display: flex; flex-direction: column; margin: 3px 4px 2px 5px; background: #f0f0f0; }
.strip {
  align-self: flex-start;
  display: flex;
  align-items: center;
  gap: 7px;
  height: 29px;
  padding: 0 6px;
  background: linear-gradient(#fdfdfd, #efefef);
}
.strip .caret { margin: 0 2px; }
.strip .combo { width: 73px; }
.strip .toggled { height: 23px; padding: 0 4px; border: 1px solid #0078d7; background: #dbe9f5; }
.strip .toggled .ic { margin-left: -2px; }
.strip .toggled + .caret { margin: 0 0 0 -4px; }
.strip .sep + .toggled { margin-left: -5px; }
.strip .sep + .tool:not(.toggled) { margin-left: -2px; }
.strip .toggled + .tool { margin-left: -2px; }
.strip.low { height: 28px; }
.low span { margin-left: -5px; }
.strip.low .joined { margin-left: -6px; }
.canvas { flex: 1; min-height: 0; border: 2px solid #f00; background: #15181f; }
.strip.foot { height: 28px; padding-left: 1px; }
.strip.foot .toggled + .toggled { margin-left: -8px; }
.strip.foot .toggled + .tool:not(.toggled) { margin-left: 0; }
.dialog-status { display: flex; gap: 3px; height: 25px; padding-top: 2px; }
.dialog-status span { padding: 3px 4px; border: 1px solid #d5d5d5; background: linear-gradient(#fff, #efefef); }
.xy { width: 98px; }
.dialog-status .hint { flex: 1; padding-left: 0; }

/* Drawing */
.drawing { width: 100%; height: 100%; fill: none; shape-rendering: crispEdges; }
.ghost { stroke: #3a3f48; stroke-dasharray: 9 3 3 3; }
.slash { stroke-dasharray: none; }
.leader { stroke: #aaa; stroke-dasharray: 3 3; }
.outline { stroke: #f0f0f0; stroke-width: 3; }
.cover { stroke: #a8c8ee; stroke-dasharray: 4 3; }
.bar { stroke: #c9181e; stroke-width: 6; }
.bar.thin { stroke-width: 5; }
.dim { stroke: #7fc46a; }
.white { stroke: #fff; }
.node { fill: #ffdb1f; shape-rendering: auto; }
.label { fill: #fff; font-size: 11px; }
.faint { fill: #3a3f48; font: 12px "Liberation Mono", monospace; }
.tag { fill: #0f0; font: bold 9px "Liberation Mono", monospace; }
.caption { fill: #b0b0b0; font-size: 21px; font-weight: 300; }
.caption.lit { fill: #00e400; }

/* Status bar */
.status { display: flex; gap: 2px; height: 20px; padding-bottom: 1px; font-family: "Liberation Serif", "Noto Sans CJK SC", serif; }
.cell { padding: 1px 2px; border: 1px solid #d0d0d0; background: linear-gradient(#fdfdfd, #f0f0f0); white-space: nowrap; }
.blank { width: 148px; }
.height { width: 78px; }
.base { width: 98px; }
.zero { width: 48px; }
.note { flex: 1; }
.fps { width: 71px; font: 10px/16px "Liberation Mono", monospace; }

/* Taskbar */
.taskbar { display: flex; height: 40px; background: #000b0d; color: #fff; }
.start { width: 48px; display: grid; place-items: center; background: #000; }
.cortana { display: flex; align-items: center; gap: 6px; width: 344px; padding: 0 13px 0 9px; background: #333; }
.cortana input { flex: 1; padding: 0; border: 0; outline: 0; background: none; font-size: 14px; }
.cortana input::placeholder { color: #9c9c9c; }
.ring { width: 22px; height: 22px; border: 3px solid #eee; border-radius: 50%; }
.app-button { width: 50px; display: grid; place-items: center; }
.view { width: 22px; height: 16px; }
.big { width: 24px; height: 24px; }
.pale { color: #e2e5e6; }
.running { width: 44px; margin: 0 3px; box-shadow: inset 0 -2px #76b9ed; }
.front { background: #343a3d; }
.tray { display: flex; align-items: center; gap: 9px; margin-left: auto; padding-right: 13px; }
.keys { width: 24px; height: 18px; color: #fff; }
.clock { width: 76px; text-align: center; line-height: 18px; }
.notice { display: grid; width: 28px; margin-left: 2px; }
.notice svg, .notice b { grid-area: 1 / 1; }
.notice svg { width: 28px; height: 28px; }
.notice b { padding: 10px 0 0 14px; font-size: 11px; }

/* Floating items */
.ime {
  position: absolute;
  top: 3px;
  left: 702px;
  display: flex;
  align-items: center;
  gap: 7px;
  width: 206px;
  height: 24px;
  border: 1px solid #b5cbe2;
  background: #fff;
  color: #2279cf;
}
.ime-logo { width: 26px; height: 26px; margin: -4px -3px 0 0; }
.ime b { font-size: 15px; }
.ball {
  position: absolute;
  top: -26px;
  left: 1077px;
  width: 45px;
  height: 45px;
  padding-top: 22px;
  border: 3px solid #ddd;
  border-radius: 50%;
  background: linear-gradient(#3bbf55, #4fd765);
  box-shadow: 0 2px 4px #999;
  color: #fff;
  font-weight: bold;
  text-align: center;
}
```
